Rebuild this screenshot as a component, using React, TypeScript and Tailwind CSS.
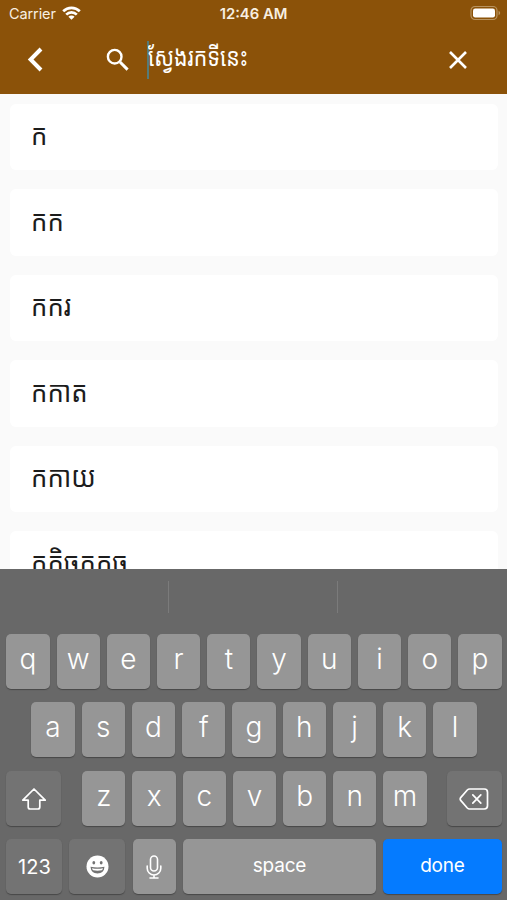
import type { ReactNode } from "react";

const words = ["ក", "កក", "កករ", "កកាត", "កកាយ", "កកិចកកុច"];

type KeyProps = { children?: ReactNode; className?: string };

function Key({ children, className = "w-[43.2px] bg-[#969696] text-[28px] font-light pb-[5px]" }: KeyProps) {
  return (
    <button
      className={`flex h-[55px] shrink-0 items-center justify-center rounded-[5px] leading-none text-white shadow-[0_1px_1px_#484848] ${className}`}
    >
      {children}
    </button>
  );
}

function Letters({ text }: { text: string }) {
  return (
    <>
      {text.split("").map((c) => (
        <Key key={c}>{c}</Key>
      ))}
    </>
  );
}

function StatusBar() {
  return (
    <div className="grid h-7 grid-cols-3 items-center pl-[9px] pr-[6px] text-[14.5px] text-[#f8efe2]">
      <div className="flex items-center gap-1.5">
        <span className="w-[47px] tracking-[-0.1px]">Carrier</span>
        <svg width="19" height="14" viewBox="0 0 19 14" fill="none" stroke="#fff" strokeWidth="2.7" className="-mt-0.5">
          <path d="M1.2 5.2a11.8 11.8 0 0 1 16.6 0" />
          <path d="M4.2 8.6a7.6 7.6 0 0 1 10.6 0" />
          <path d="M9.5 13.8 6.4 10.7a4.4 4.4 0 0 1 6.2 0z" fill="#fff" stroke="none" />
        </svg>
      </div>
      <span className="-ml-[3px] text-center text-[14.8px] font-semibold whitespace-nowrap">12:46 AM</span>
      <svg className="-mt-0.5 justify-self-end" width="31" height="16" viewBox="0 0 31 16">
        <rect x="1" y="1.5" width="26" height="13" rx="4" fill="none" stroke="#b8935f" strokeWidth="1.2" />
        <rect x="3" y="3.5" width="22" height="9" rx="2.2" fill="#fff" />
        <path d="M28.6 5.8v4.4q1.6-.7 1.6-2.2t-1.6-2.2z" fill="#b8935f" />
      </svg>
    </div>
  );
}

function SearchBar() {
  return (
    <div className="flex h-[66px] items-center pl-[27px] pr-[39px]">
      <svg width="17" height="25" viewBox="0 0 17 25" fill="none" stroke="#fff" strokeWidth="4" className="-mt-1">
        <path d="M14 2 3.6 12.5 14 23" />
      </svg>
      <svg width="23" height="23" viewBox="0 0 23 23" fill="none" stroke="#fff" strokeWidth="2.4" className="-mt-1 ml-[62px]">
        <circle cx="8.7" cy="8.7" r="6.8" />
        <path d="m14 14 7.6 7.6" strokeWidth="3" />
      </svg>
      <div className="-mt-[3px] ml-[17.5px] flex flex-1 items-center">
        <span className="h-[38px] w-[2px] bg-[#557b78]" />
        <span className="-ml-px -mt-[5px] origin-left scale-x-[0.97] scale-y-[1.13] text-[22px] leading-[38px] text-white">ស្វែងរកទីនេះ</span>
      </div>
      <svg width="20" height="20" viewBox="0 0 20 20" stroke="#fff" strokeWidth="2.6" className="-mt-[3px]">
        <path d="m2 2 16 16M18 2 2 18" />
      </svg>
    </div>
  );
}

function Keyboard() {
  return (
    <section className="h-[331px] shrink-0 bg-[#686868] pl-[6.4px] pr-[5.4px]">
      <div className="flex h-[65px] items-start justify-center gap-[168px] pt-3 pr-[2px]">
        <i className="h-8 w-px bg-[#7b7b7b]" />
        <i className="h-8 w-px bg-[#7b7b7b]" />
      </div>
      <div className="flex flex-col gap-[13.4px]">
        <div className="flex justify-between">
          <Letters text="qwertyuiop" />
        </div>
        <div className="flex justify-between px-[25px]">
          <Letters text="asdfghjkl" />
        </div>
        <div className="flex justify-between">
          <Key className="w-[55px] bg-[#737373]">
            <svg width="26" height="24" viewBox="0 0 26 24" fill="none" stroke="#fff" strokeWidth="1.7" strokeLinejoin="round" className="mt-0.5">
              <path d="M13 2 1.8 13.2h5.4V20q0 2 2 2h7.6q2 0 2-2v-6.8h5.4z" />
            </svg>
          </Key>
          <div className="ml-px flex w-[344.4px] justify-between">
            <Letters text="zxcvbnm" />
          </div>
          <Key className="w-[55px] bg-[#737373]">
            <svg width="30" height="22" viewBox="0 0 30 22" fill="none" stroke="#fff" strokeWidth="1.7" strokeLinejoin="round" strokeLinecap="round" className="mt-0.5">
              <path d="M10.5 1h14.8Q28.5 1 28.5 4.2v13.6q0 3.2-3.2 3.2H10.5q-1.2 0-2.2-1L1.7 12.4q-1-1.4 0-2.8L8.3 2q1-1 2.2-1z" />
              <path d="m13.8 6.8 8 8.4m0-8.4-8 8.4" />
            </svg>
          </Key>
        </div>
        <div className="flex justify-between">
          <Key className="w-[56px] bg-[#737373] text-[20px]">123</Key>
          <Key className="w-[56px] bg-[#737373]">
            <svg width="23" height="23" viewBox="0 0 23 23">
              <circle cx="11.5" cy="11.5" r="11" fill="#fff" />
              <ellipse cx="7.8" cy="7.7" rx="1.4" ry="1.8" fill="#737373" />
              <ellipse cx="15.2" cy="7.7" rx="1.4" ry="1.8" fill="#737373" />
              <path d="M4.5 11.8q7 1.5 14 0-.5 6.6-7 6.6t-7-6.6z" fill="#737373" />
              <path d="M6 13.2q5.5 1 11 0-.3 1.6-1.2 2.1-4.3.7-8.6 0-.9-.5-1.2-2.1z" fill="#fff" />
            </svg>
          </Key>
          <Key className="w-[43.2px] bg-[#969696]">
            <svg width="16" height="24" viewBox="0 0 16 24" fill="none" stroke="#fff" strokeWidth="1.6" strokeLinecap="round">
              <rect x="4.5" y="1" width="7" height="15" rx="3.5" />
              <path d="M1.2 11v2.2a6.8 6.8 0 0 0 13.6 0V11M8 20v3M4 23h8" />
            </svg>
          </Key>
          <Key className="w-[193.4px] bg-[#969696] text-[19px] tracking-[-0.2px] pb-[3px]">space</Key>
          <Key className="w-[118.4px] bg-[#057bff] text-[19px] tracking-[-0.2px] pb-[3px]">done</Key>
        </div>
      </div>
    </section>
  );
}

export default function App() {
  return (
    <main className="flex h-[900px] w-[507px] flex-col overflow-hidden bg-[#fafafa] font-[Inter,'Noto_Sans_Khmer','Khmer_OS','Noto_Sans',sans-serif]">
      <header className="h-[94px] shrink-0 bg-[#8b5209]">
        <StatusBar />
        <SearchBar />
      </header>
      <ul className="flex min-h-0 flex-1 flex-col gap-[19px] overflow-hidden pl-[10px] pr-[9px] pt-[9.5px]">
        {words.map((w) => (
          <li key={w} className="flex h-[66.5px] shrink-0 items-center rounded-md bg-white pl-[20.5px] text-[25px] leading-[50px] text-[#1c1c1c]">
            <span className="-mt-[5px] origin-left scale-x-[1.03] scale-y-[1.17]">{w}</span>
          </li>
        ))}
      </ul>
      <Keyboard />
    </main>
  );
}
